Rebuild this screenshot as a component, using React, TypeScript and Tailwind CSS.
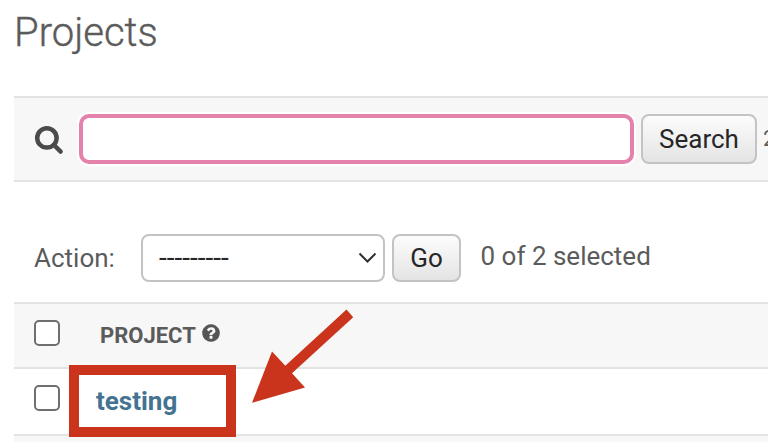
import React from "react";

function SearchIcon() {
  return (
    <svg className="block h-[30px] w-[30px] shrink-0" viewBox="0 0 30 30" fill="none" stroke="#4b4b4b">
      <circle cx="12.900" cy="13.900" r="9.700" strokeWidth="4.500" />
      <path d="M20 21L26.600 27.600" strokeWidth="4.400" strokeLinecap="round" />
    </svg>
  );
}

function HelpIcon() {
  return (
    <svg className="block h-[18px] w-[18px]" viewBox="110 110 1572 1572">
      <path
        fill="#555555"
        d="M1024 1376v-192q0-14-9-23t-23-9h-192q-14 0-23 9t-9 23v192q0 14 9 23t23 9h192q14 0 23-9t9-23zm256-672q0-88-55.500-163t-138.500-116-170-41q-243 0-371 213-15 24 8 42l132 100q7 6 19 6 16 0 25-12 53-68 86-92 34-24 86-24 48 0 85.500 26t37.500 59q0 38-20 61t-68 45q-63 28-115.500 86.500t-52.500 125.500v36q0 14 9 23t23 9h192q14 0 23-9t9-23q0-19 21.500-49.500t54.500-49.500q32-18 49-28.500t46-35 44.500-48 28-60.500 12.500-81zm384 192q0 209-103 385.500t-279.500 279.500-385.500 103-385.500-103-279.500-279.500-103-385.500 103-385.500 279.500-279.500 385.500-103 385.500 103 279.500 279.500 103 385.500z"
      />
    </svg>
  );
}

function Checkbox({ label }: { label: string }) {
  return (
    <input
      type="checkbox"
      aria-label={label}
      className="block h-[26px] w-[26px] shrink-0 appearance-none rounded-[5px] border-2 border-[#6f6f6f] bg-white"
    />
  );
}

const button =
  "shrink-0 rounded-[8px] border-2 border-[#c3c3c3] bg-linear-to-b from-[#fcfcfc] to-[#e4e4e4] text-center text-[26px] leading-[30px] text-[#262626]";

export default function App() {
  return (
    <main className="relative h-[442px] w-[768px] overflow-hidden bg-white pl-[14px] font-['Roboto',sans-serif] text-[#5b5b5b]">
      <h1 className="h-[96px] pt-[9px] text-[40px] leading-[48px] font-light whitespace-nowrap [-webkit-text-stroke:0.4px_#5b5b5b]">Projects</h1>

      <form className="flex h-[86px] items-center border-y-2 border-[#e3e3e3] bg-[#f7f7f7] pl-[20px]">
        <SearchIcon />
        <input
          aria-label="Search projects"
          className="ml-[15px] h-[50px] w-[555px] shrink-0 rounded-[10px] border-4 border-[#e482ac] bg-white shadow-[0_0_0_2px_#ffffff] outline-none"
        />
        <button type="button" className={`${button} ml-[7px] h-[50px] w-[116px]`}>Search</button>
        <span className="ml-[6px] shrink-0 text-[22px] leading-[26px]">2</span>
      </form>

      <div className="flex h-[120px] items-start pt-[52px] pl-[20px] text-[26px]">
        <span className="mt-[9px] w-[107px] leading-[30px]">Action:</span>
        <div className="flex h-[48px] w-[244px] items-center justify-between rounded-[8px] border-2 border-[#c3c3c3] bg-white pr-[6px] pl-[16px] text-[#262626]">
          <span className="text-[28px] leading-[30px]">---------</span>
          <svg className="h-[12px] w-[19px]" viewBox="0 0 19 12" fill="none">
            <path d="M1.500 1.500L9.500 9.500L17.500 1.500" stroke="#303030" strokeWidth="2" />
          </svg>
        </div>
        <button type="button" className={`${button} ml-[7px] h-[48px] w-[69px]`}>Go</button>
        <span className="mt-[7px] ml-[19.500px] leading-[30px]">0 of 2 selected</span>
      </div>

      <section>
        <div className="flex h-[65px] items-start border-t-2 border-[#e3e3e3] bg-[#f7f7f7] pt-[16px] pl-[20px]">
          <Checkbox label="Select all projects" />
          <span className="mt-[3px] ml-[40px] text-[22px] leading-[26px] font-bold">PROJECT</span>
          <span className="mt-[4px] ml-[6px]"><HelpIcon /></span>
        </div>
        <div className="flex h-[67px] items-start border-t-2 border-[#e3e3e3] bg-white pt-[16px] pl-[20px]">
          <Checkbox label="Select testing" />
          <a className="ml-[36px] text-[26px] leading-[32px] font-bold text-[#447392]">testing</a>
        </div>
        <div className="h-[8px] border-t-2 border-[#e3e3e3] bg-[#f7f7f7]" />
      </section>

      <div className="pointer-events-none absolute top-[365px] left-[69px] h-[72px] w-[167px] border-[10px] border-[#ca331c]" />
      <svg className="pointer-events-none absolute top-[300px] left-[245px] h-[110px] w-[115px]" viewBox="245 300 115 110">
        <polygon fill="#ca331c" points="252,402.800 272,351.500 285.300,365.800 346.500,309.500 353.200,317.200 292,373.200 305,387.500" />
      </svg>
    </main>
  );
}
